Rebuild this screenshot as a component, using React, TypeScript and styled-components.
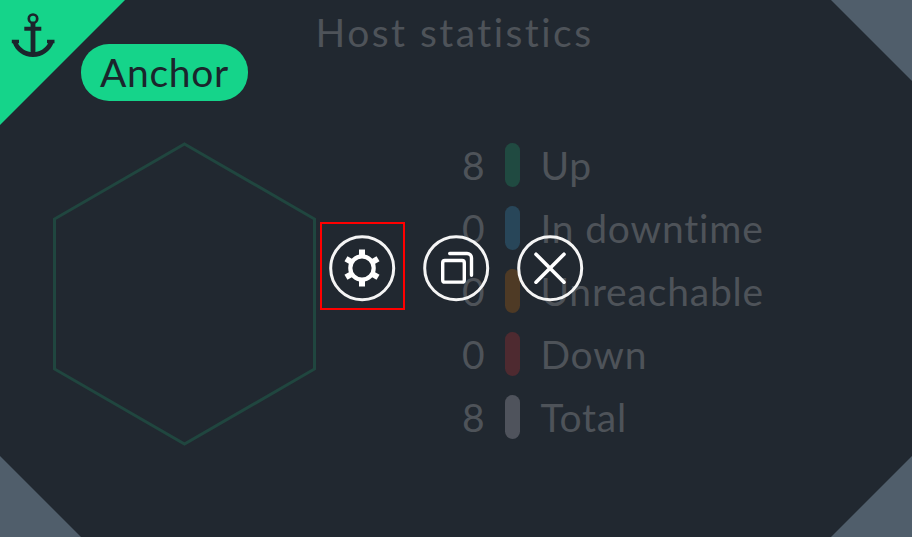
import React from "react";
import styled, { createGlobalStyle } from "styled-components";

const GlobalStyle = createGlobalStyle`
  body { margin: 0; }
  * { box-sizing: border-box; }
`;

const Dashlet = styled.main`
  position: relative;
  display: flex;
  flex-direction: column;
  width: 912px;
  height: 537px;
  overflow: hidden;
  background: #212830;
  color: #4e5359;
  font-family: Lato, sans-serif;
  font-size: 39px;
  line-height: 48px;
`;

const Title = styled.h1`
  margin: 0;
  height: 68px;
  padding: 8px 3px 0 0;
  text-align: center;
  font-size: 39px;
  font-weight: 400;
  letter-spacing: 2.45px;
`;

const Content = styled.div`
  display: flex;
  padding: 72px 0 0 50px;
`;

const Hexagon = styled.svg`
  display: block;
  width: 270px;
  height: 310px;
`;

const Stats = styled.ul`
  list-style: none;
  margin: 3px 0 0 130px;
  padding: 0;
  display: grid;
  grid-auto-rows: 44px;
  row-gap: 19px;
  height: 296px;
`;

const Stat = styled.li`
  display: grid;
  grid-template-columns: 34.6px 15px auto;
  grid-template-rows: 44px;
  column-gap: 20.4px;
  margin-right: 0;
  align-items: center;
  white-space: nowrap;
`;

const Count = styled.span`
  text-align: right;
`;

const Bar = styled.span<{ $color: string }>`
  height: 44px;
  border-radius: 7.5px;
  background: ${(p) => p.$color};
`;

const Label = styled.span`
  letter-spacing: 0.82px;
`;

const Corner = styled.div<{ $at: "tr" | "bl" | "br" }>`
  position: absolute;
  width: 81px;
  height: 81px;
  background: #505e6b;
  ${(p) => p.$at === "tr" && "top: 0; right: 0; clip-path: polygon(0 0, 100% 0, 100% 100%);"}
  ${(p) => p.$at === "bl" && "bottom: 0; left: 0; clip-path: polygon(0 0, 100% 100%, 0 100%);"}
  ${(p) => p.$at === "br" && "bottom: 0; right: 0; clip-path: polygon(100% 0, 100% 100%, 0 100%);"}
`;

const AnchorCorner = styled.div`
  position: absolute;
  top: 0;
  left: 0;
  width: 125px;
  height: 125px;
  padding: 10px 0 0 8px;
  background: #15d48a;
  clip-path: polygon(0 0, 100% 0, 0 100%);
`;

const AnchorBadge = styled.div`
  position: absolute;
  top: 44px;
  left: 81px;
  width: 167px;
  height: 57px;
  border-radius: 28px;
  background: #15d48a;
  color: #1b252c;
  text-align: center;
  line-height: 56px;
  letter-spacing: 0.7px;
`;

const Controls = styled.div`
  position: absolute;
  top: 222px;
  left: 320px;
  display: flex;
  align-items: center;
  gap: 9px;
`;

const ControlButton = styled.button<{ $highlighted?: boolean }>`
  display: flex;
  align-items: center;
  justify-content: center;
  width: 85px;
  height: 88px;
  padding: 4px 1px 0 0;
  border: 2px solid ${(p) => (p.$highlighted ? "#ff0000" : "transparent")};
  background: none;
`;

const Icon = styled.svg`
  display: block;
  flex: none;
`;

const STATS = [
  { count: 8, label: "Up", color: "#204a41" },
  { count: 0, label: "In downtime", color: "#284659" },
  { count: 0, label: "Unreachable", color: "#4e3a25" },
  { count: 0, label: "Down", color: "#4e2a30" },
  { count: 8, label: "Total", color: "#4f535c" },
];

const Ring = () => <circle cx="34.2" cy="34.2" r="31.5" stroke="#f5f5f5" strokeWidth="3" />;

const GearIcon = () => (
  <Icon width="68" height="68" viewBox="0 0 68 68" fill="none">
    <Ring />
    <circle cx="34" cy="34" r="11.7" stroke="#fff" strokeWidth="4.2" />
    {[0, 60, 120, 180, 240, 300].map((angle) => (
      <path key={angle} d="M31 15.5h6v6.5h-6z" fill="#fff" transform={`rotate(${angle} 34 34)`} />
    ))}
  </Icon>
);

const CloneIcon = () => (
  <Icon width="68" height="68" viewBox="0 0 68 68" fill="none" stroke="#fff" strokeWidth="3.4">
    <Ring />
    <rect x="20.7" y="26.5" width="21.6" height="21.6" rx="2.2" />
    <path d="M27.7 19.5H45a4.5 4.5 0 0 1 4.5 4.5v17.2" strokeLinecap="round" />
  </Icon>
);

const CloseIcon = () => (
  <Icon width="68" height="68" viewBox="0 0 68 68" fill="none">
    <Ring />
    <path d="M20 20.2l28 28M48 20.2L20 48.2" stroke="#fff" strokeWidth="3.6" strokeLinecap="round" />
  </Icon>
);

const AnchorIcon = () => (
  <Icon width="50" height="50" viewBox="0 0 50 50" fill="none" stroke="#1b252c">
    <circle cx="25" cy="8.7" r="4.2" strokeWidth="2.7" />
    <path d="M25 12.5v32" strokeWidth="4.8" />
    <path d="M16.3 18.7h17" strokeWidth="4" />
    <path d="M3.8 29.8h7.2v3.4H9.8C12.6 38.3 18.3 42.2 25 42.2s12.4-3.9 15.2-9H39v-3.4h7.5v3.4h-1.1C42.3 41.1 34.5 47 25 47S7.7 41.1 4.9 33.2H3.8z" fill="#1b252c" stroke="none" />
  </Icon>
);

export default function App() {
  return (
    <>
      <GlobalStyle />
      <Dashlet>
        <Title>Host statistics</Title>
        <Content>
          <Hexagon viewBox="0 0 270 310" fill="none">
            <path d="M134.5 4L264.5 79V229L134.5 304L4.5 229V79Z" stroke="#20463f" strokeWidth="3" />
          </Hexagon>
          <Stats>
            {STATS.map((s) => (
              <Stat key={s.label}>
                <Count>{s.count}</Count>
                <Bar $color={s.color} />
                <Label>{s.label}</Label>
              </Stat>
            ))}
          </Stats>
        </Content>
        <Corner $at="tr" />
        <Corner $at="bl" />
        <Corner $at="br" />
        <AnchorCorner>
          <AnchorIcon />
        </AnchorCorner>
        <AnchorBadge>Anchor</AnchorBadge>
        <Controls>
          <ControlButton $highlighted aria-label="Edit properties">
            <GearIcon />
          </ControlButton>
          <ControlButton aria-label="Clone">
            <CloneIcon />
          </ControlButton>
          <ControlButton aria-label="Delete">
            <CloseIcon />
          </ControlButton>
        </Controls>
      </Dashlet>
    </>
  );
}
